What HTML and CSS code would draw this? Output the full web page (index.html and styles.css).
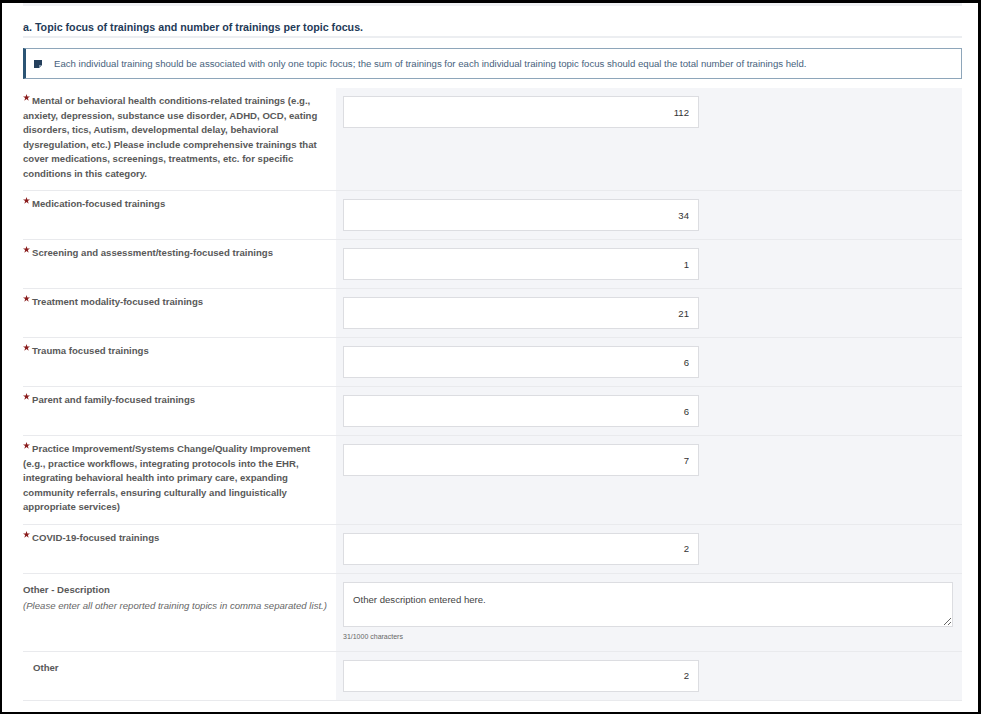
FILE: index.html
```html
<!DOCTYPE html>
<html lang="en">
<head>
    <meta charset="UTF-8">
    <meta name="viewport" content="width=device-width, initial-scale=1.0">
    <title>Topic focus of trainings</title>
    <link rel="stylesheet" href="styles.css">
</head>
<body>
    <div class="frame">
        <div class="section">
            <div class="top-rule"></div>
            <h2 class="title">a. Topic focus of trainings and number of trainings per topic focus.</h2>

            <div class="note">
                <svg class="note-icon" width="8" height="8" viewBox="0 0 8 8">
                    <path d="M0 0H8V5L5 8H0Z" fill="#243f5c"/>
                    <path d="M8 5L5 8V5Z" fill="#7f93a8"/>
                </svg>
                <span>Each individual training should be associated with only one topic focus; the sum of trainings for each individual training topic focus should equal the total number of trainings held.</span>
            </div>

            <div class="rows">
                <div class="row">
                    <div class="label"><svg class="req" width="7" height="7" viewBox="0 0 10 10"><path d="M5 0L6.2 3.6H10L6.9 5.8L8.1 9.5L5 7.2L1.9 9.5L3.1 5.8L0 3.6H3.8Z"/></svg>Mental or behavioral health conditions-related trainings (e.g., anxiety, depression, substance use disorder, ADHD, OCD, eating disorders, tics, Autism, developmental delay, behavioral dysregulation, etc.) Please include comprehensive trainings that cover medications, screenings, treatments, etc. for specific conditions in this category.</div>
                    <div class="field"><input class="num" type="text" value="112"></div>
                </div>
                <div class="row">
                    <div class="label"><svg class="req" width="7" height="7" viewBox="0 0 10 10"><path d="M5 0L6.2 3.6H10L6.9 5.8L8.1 9.5L5 7.2L1.9 9.5L3.1 5.8L0 3.6H3.8Z"/></svg>Medication-focused trainings</div>
                    <div class="field"><input class="num" type="text" value="34"></div>
                </div>
                <div class="row">
                    <div class="label"><svg class="req" width="7" height="7" viewBox="0 0 10 10"><path d="M5 0L6.2 3.6H10L6.9 5.8L8.1 9.5L5 7.2L1.9 9.5L3.1 5.8L0 3.6H3.8Z"/></svg>Screening and assessment/testing-focused trainings</div>
                    <div class="field"><input class="num" type="text" value="1"></div>
                </div>
                <div class="row">
                    <div class="label"><svg class="req" width="7" height="7" viewBox="0 0 10 10"><path d="M5 0L6.2 3.6H10L6.9 5.8L8.1 9.5L5 7.2L1.9 9.5L3.1 5.8L0 3.6H3.8Z"/></svg>Treatment modality-focused trainings</div>
                    <div class="field"><input class="num" type="text" value="21"></div>
                </div>
                <div class="row">
                    <div class="label"><svg class="req" width="7" height="7" viewBox="0 0 10 10"><path d="M5 0L6.2 3.6H10L6.9 5.8L8.1 9.5L5 7.2L1.9 9.5L3.1 5.8L0 3.6H3.8Z"/></svg>Trauma focused trainings</div>
                    <div class="field"><input class="num" type="text" value="6"></div>
                </div>
                <div class="row">
                    <div class="label"><svg class="req" width="7" height="7" viewBox="0 0 10 10"><path d="M5 0L6.2 3.6H10L6.9 5.8L8.1 9.5L5 7.2L1.9 9.5L3.1 5.8L0 3.6H3.8Z"/></svg>Parent and family-focused trainings</div>
                    <div class="field"><input class="num" type="text" value="6"></div>
                </div>
                <div class="row">
                    <div class="label"><svg class="req" width="7" height="7" viewBox="0 0 10 10"><path d="M5 0L6.2 3.6H10L6.9 5.8L8.1 9.5L5 7.2L1.9 9.5L3.1 5.8L0 3.6H3.8Z"/></svg>Practice Improvement/Systems Change/Quality Improvement (e.g., practice workflows, integrating protocols into the EHR, integrating behavioral health into primary care, expanding community referrals, ensuring culturally and linguistically appropriate services)</div>
                    <div class="field"><input class="num" type="text" value="7"></div>
                </div>
                <div class="row">
                    <div class="label"><svg class="req" width="7" height="7" viewBox="0 0 10 10"><path d="M5 0L6.2 3.6H10L6.9 5.8L8.1 9.5L5 7.2L1.9 9.5L3.1 5.8L0 3.6H3.8Z"/></svg>COVID-19-focused trainings</div>
                    <div class="field"><input class="num" type="text" value="2"></div>
                </div>
                <div class="row">
                    <div class="label plain">
                        Other - Description
                        <div class="hint">(Please enter all other reported training topics in comma separated list.)</div>
                    </div>
                    <div class="field">
                        <textarea class="desc">Other description entered here.</textarea>
                        <div class="counter">31/1000 characters</div>
                    </div>
                </div>
                <div class="row">
                    <div class="label plain indent">Other</div>
                    <div class="field"><input class="num" type="text" value="2"></div>
                </div>
            </div>
        </div>
    </div>
</body>
</html>
```

FILE: styles.css
```css
body {
    margin: 0;
    background: #fff;
    font-family: "Liberation Sans", Arial, sans-serif;
}
.frame {
    width: 981px;
    height: 714px;
    box-sizing: border-box;
    border: 2px solid #000;
    border-top-width: 3px;
    border-right-width: 3px;
    overflow: hidden;
}
.section {
    width: 939px;
    margin-left: 21px;
}
.top-rule {
    height: 3px;
    background: #f0f1f4;
}
.title {
    margin: 0;
    padding: 15px 0 3px;
    font-size: 10.7px;
    font-weight: bold;
    color: #1f3b58;
    border-bottom: 2px solid #eceef1;
}
.note {
    margin-top: 10px;
    height: 31px;
    box-sizing: border-box;
    border: 1px solid #8ea6ba;
    border-left: 3px solid #2b5474;
    display: flex;
    align-items: center;
    font-size: 9.6px;
    color: #47627d;
}
.note-icon {
    margin: 0 12px 0 8px;
    flex: none;
}
.rows {
    margin-top: 9px;
}
.row {
    display: grid;
    grid-template-columns: 313px 1fr;
    border-bottom: 1px solid #e9eaed;
}
.label {
    padding: 6px 14px 9px 0;
    font-size: 9.6px;
    line-height: 14.5px;
    font-weight: bold;
    color: #595959;
}
.label.plain {
    padding-top: 9px;
}
.label.indent {
    padding-left: 10px;
}
.req {
    fill: #8a1c1c;
    margin-right: 2px;
    vertical-align: 3px;
}
.hint {
    font-weight: normal;
    font-style: italic;
    color: #666;
    margin-top: 2px;
    white-space: nowrap;
}
.field {
    background: #f4f5f8;
    padding: 8px 9px 8px 7px;
}
.num {
    display: block;
    width: 356px;
    height: 32px;
    box-sizing: border-box;
    border: 1px solid #dcdde1;
    background: #fff;
    text-align: right;
    padding: 0 9px;
    font-family: "Liberation Sans", Arial, sans-serif;
    font-size: 9.6px;
    color: #333;
}
.desc {
    display: block;
    width: 610px;
    height: 45px;
    box-sizing: border-box;
    border: 1px solid #dcdde1;
    background: #fff;
    padding: 11px 9px;
    font-family: "Liberation Sans", Arial, sans-serif;
    font-size: 9.6px;
    color: #444;
    resize: vertical;
}
.counter {
    font-size: 7px;
    color: #666;
    margin: 6px 0 3px;
}
```
